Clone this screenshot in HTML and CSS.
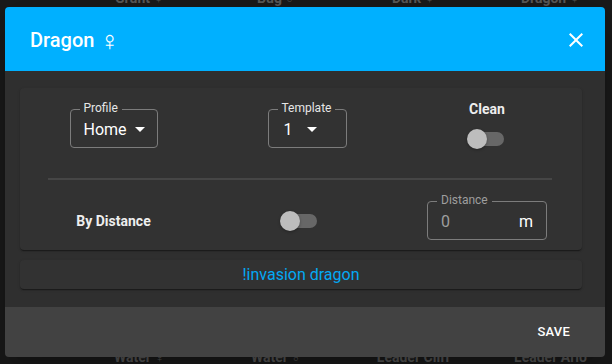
FILE: index.html
```html
<!DOCTYPE html>
<html lang="en">
<head>
<meta charset="utf-8">
<title>Dragon</title>
<link rel="stylesheet" href="styles.css">
</head>
<body>
<div class="backdrop">
  <div class="bg-row bg-row-top">
    <span>Grunt ♀</span><span>Bug ♂</span><span>Dark ♀</span><span>Dragon ♀</span>
  </div>
  <div class="bg-row bg-row-bottom">
    <span>Water ♀</span><span>Water ♂</span><span>Leader Cliff</span><span>Leader Arlo</span>
  </div>
</div>

<div class="dialog">
  <div class="dialog-header">
    <div class="dialog-title">Dragon <span class="sym">♀</span></div>
    <button class="close-btn" aria-label="Close">
      <svg viewBox="0 0 24 24" width="24" height="24"><path fill="#fff" d="M19 6.41L17.59 5 12 10.59 6.41 5 5 6.41 10.59 12 5 17.59 6.41 19 12 13.41 17.59 19 19 17.59 13.41 12z"/></svg>
    </button>
  </div>
  <div class="dialog-body">
    <div class="card card-main">
      <div class="grid row-top">
        <div class="field field-profile">
          <span class="field-label">Profile</span>
          <span class="field-value">Home</span>
          <svg class="caret" viewBox="0 0 24 24" width="24" height="24"><path fill="#fff" d="M7 10l5 5 5-5z"/></svg>
        </div>
        <div class="field field-template">
          <span class="field-label">Template</span>
          <span class="field-value">1</span>
          <svg class="caret" viewBox="0 0 24 24" width="24" height="24"><path fill="#fff" d="M7 10l5 5 5-5z"/></svg>
        </div>
        <div class="switch-col">
          <span class="switch-label">Clean</span>
          <span class="switch"></span>
        </div>
      </div>
      <div class="divider"></div>
      <div class="grid row-bottom">
        <span class="switch-label">By Distance</span>
        <span class="switch switch-shift"></span>
        <div class="field field-distance">
          <span class="field-label dim">Distance</span>
          <span class="field-value dim">0</span>
          <span class="suffix">m</span>
        </div>
      </div>
    </div>
    <div class="card card-cmd">!invasion dragon</div>
  </div>
  <div class="dialog-footer">
    <button class="save-btn">SAVE</button>
  </div>
</div>
</body>
</html>
```

FILE: styles.css
```css
html, body {
  margin: 0;
  padding: 0;
}
body {
  width: 612px;
  height: 364px;
  overflow: hidden;
  background: #1b1b1b;
  font-family: Roboto, "Liberation Sans", "DejaVu Sans", sans-serif;
  position: relative;
}

.backdrop {
  display: flex;
  flex-direction: column;
}
.bg-row {
  display: grid;
  grid-template-columns: repeat(4, 137px);
  margin-left: 71px;
  font-size: 14px;
  font-weight: 700;
  line-height: 16px;
  color: #5a5a5a;
  white-space: nowrap;
}
.bg-row span {
  justify-self: center;
}
.bg-row-top {
  margin-top: -10px;
}
.bg-row-bottom {
  margin-top: 343px;
}

.dialog {
  position: absolute;
  left: 5px;
  top: 7px;
  width: 600px;
  height: 350px;
  border-radius: 4px;
  overflow: hidden;
  display: flex;
  flex-direction: column;
  box-shadow: 0 11px 15px -7px rgba(0,0,0,.2), 0 24px 38px 3px rgba(0,0,0,.14), 0 9px 46px 8px rgba(0,0,0,.12);
}

.dialog-header {
  height: 64px;
  flex: none;
  background: #00b0ff;
  display: flex;
  align-items: center;
  justify-content: space-between;
  padding: 0 17px 0 25px;
}
.dialog-title {
  color: #fff;
  font-size: 20px;
  font-weight: 500;
  line-height: 24px;
  margin-top: 1px;
  display: flex;
  align-items: center;
  gap: 5px;
}
.dialog-title .sym {
  font-family: "DejaVu Sans", sans-serif;
  font-weight: 200;
  font-size: 27px;
  line-height: 24px;
  margin-top: 3px;
}
.close-btn {
  background: none;
  border: 0;
  padding: 0;
  width: 24px;
  height: 24px;
  display: flex;
  margin-top: 1px;
}

.dialog-body {
  height: 236px;
  box-sizing: border-box;
  background: #2f2f2f;
  padding: 17px 23px 18px 15px;
  display: flex;
  flex-direction: column;
  gap: 10px;
}

.card {
  background: #323232;
  border-radius: 4px;
  box-shadow: 0 2px 1px -1px rgba(0,0,0,.25), 0 1px 1px 0 rgba(0,0,0,.18), 0 1px 3px 0 rgba(0,0,0,.16);
}
.card-main {
  height: 162px;
  box-sizing: border-box;
  padding-top: 13px;
}
.card-cmd {
  height: 29px;
  display: flex;
  align-items: center;
  justify-content: center;
  color: #03a9f4;
  font-size: 16px;
  line-height: 20px;
}

.grid {
  display: grid;
  grid-template-columns: 187px 200px 160px;
  justify-items: center;
}
.row-top {
  height: 48px;
  align-items: start;
}
.row-top .field {
  margin-top: 8px;
}
.divider {
  height: 2px;
  margin: 29px 30px 0 28px;
  background: #464646;
}
.row-bottom {
  margin-top: 21px;
  height: 39px;
  align-items: center;
}

.field {
  position: relative;
  box-sizing: border-box;
  height: 39px;
  border: 1px solid #7c7c7c;
  border-radius: 4px;
  display: flex;
  align-items: center;
  color: #fff;
}
.field-label {
  position: absolute;
  left: 9px;
  top: -8px;
  padding: 0 4px;
  background: #323232;
  font-size: 12px;
  line-height: 12px;
  color: #e6e6e6;
}
.field-value {
  font-size: 16px;
  line-height: 20px;
  margin-top: 2px;
}
.dim {
  color: #9e9e9e;
}
.caret {
  flex: none;
}
.field-profile {
  width: 88px;
  padding-left: 13px;
}
.field-profile .caret {
  margin-left: 1px;
}
.field-template {
  width: 79px;
  padding-left: 15px;
}
.field-template .caret {
  margin-left: 7px;
}
.field-distance {
  width: 120px;
  padding: 0 13px;
  justify-content: space-between;
}
.suffix {
  font-size: 16px;
  line-height: 20px;
  color: #fff;
  margin-top: 2px;
}

.switch-col {
  display: flex;
  flex-direction: column;
  align-items: center;
}
.switch-label {
  font-size: 14px;
  font-weight: 700;
  line-height: 16px;
  color: #eeeeee;
}
.switch-col .switch {
  margin-top: 12px;
  margin-right: 3px;
}
.switch {
  position: relative;
  display: block;
  width: 37px;
  height: 20px;
}
.switch::before {
  content: "";
  position: absolute;
  left: 3px;
  top: 3px;
  width: 34px;
  height: 14px;
  border-radius: 7px;
  background: #676767;
}
.switch::after {
  content: "";
  position: absolute;
  left: 0;
  top: 0;
  width: 20px;
  height: 20px;
  border-radius: 50%;
  background: #bdbdbd;
  box-shadow: 0 1px 3px rgba(0,0,0,.3);
}
.switch-shift {
  margin-right: 17px;
}

.dialog-footer {
  flex: 1;
  background: #424242;
  display: flex;
  align-items: center;
  justify-content: flex-end;
  padding-right: 35px;
}
.save-btn {
  background: none;
  border: 0;
  padding: 0;
  color: #fff;
  font-family: Roboto, "Liberation Sans", sans-serif;
  font-size: 13px;
  font-weight: 500;
  line-height: 16px;
  letter-spacing: 0.2px;
}
```
